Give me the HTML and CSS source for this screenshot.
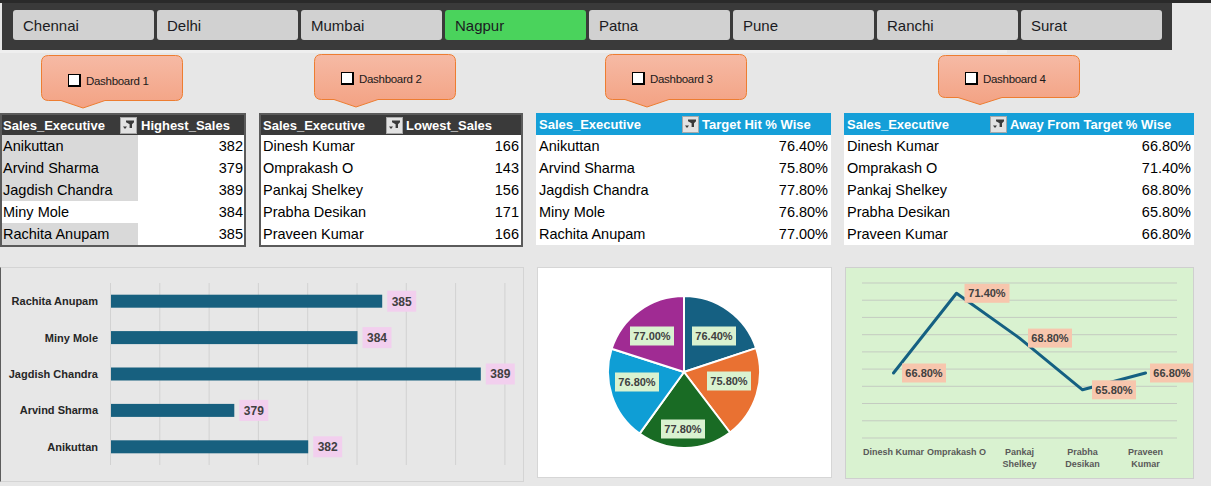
FILE: index.html
```html
<!DOCTYPE html>
<html>
<head>
<meta charset="utf-8">
<link rel="stylesheet" href="styles.css">
</head>
<body>
<div class="page">
  <div class="slicer">
    <div class="btn">Chennai</div>
    <div class="btn">Delhi</div>
    <div class="btn">Mumbai</div>
    <div class="btn on">Nagpur</div>
    <div class="btn">Patna</div>
    <div class="btn">Pune</div>
    <div class="btn">Ranchi</div>
    <div class="btn">Surat</div>
  </div>
  <div class="strip"></div>

  <div class="callouts">
    <div class="callout d1">
      <svg class="shape" width="142" height="54" viewBox="0 0 142 54"><defs><linearGradient id="g1" x1="0" y1="0" x2="0" y2="1"><stop offset="0" stop-color="#f6baa5"/><stop offset="1" stop-color="#f3a283"/></linearGradient></defs><path d="M7.5 0.5H134.5Q141.5 0.5 141.5 7.5V38.5Q141.5 45.5 134.5 45.5H64L42 53L20 45.5H7.5Q0.5 45.5 0.5 38.5V7.5Q0.5 0.5 7.5 0.5Z" fill="url(#g1)" stroke="#ed7d31"/></svg>
      <span class="chk"></span><span class="lbl">Dashboard 1</span>
    </div>
    <div class="callout d2">
      <svg class="shape" width="142" height="54" viewBox="0 0 142 54"><defs><linearGradient id="g2" x1="0" y1="0" x2="0" y2="1"><stop offset="0" stop-color="#f6baa5"/><stop offset="1" stop-color="#f3a283"/></linearGradient></defs><path d="M7.5 0.5H134.5Q141.5 0.5 141.5 7.5V38.5Q141.5 45.5 134.5 45.5H64L42 53L20 45.5H7.5Q0.5 45.5 0.5 38.5V7.5Q0.5 0.5 7.5 0.5Z" fill="url(#g2)" stroke="#ed7d31"/></svg>
      <span class="chk"></span><span class="lbl">Dashboard 2</span>
    </div>
    <div class="callout d3">
      <svg class="shape" width="142" height="54" viewBox="0 0 142 54"><defs><linearGradient id="g3" x1="0" y1="0" x2="0" y2="1"><stop offset="0" stop-color="#f6baa5"/><stop offset="1" stop-color="#f3a283"/></linearGradient></defs><path d="M7.5 0.5H134.5Q141.5 0.5 141.5 7.5V38.5Q141.5 45.5 134.5 45.5H64L42 53L20 45.5H7.5Q0.5 45.5 0.5 38.5V7.5Q0.5 0.5 7.5 0.5Z" fill="url(#g3)" stroke="#ed7d31"/></svg>
      <span class="chk"></span><span class="lbl">Dashboard 3</span>
    </div>
    <div class="callout d4">
      <svg class="shape" width="142" height="51" viewBox="0 0 142 51"><defs><linearGradient id="g4" x1="0" y1="0" x2="0" y2="1"><stop offset="0" stop-color="#f6baa5"/><stop offset="1" stop-color="#f3a283"/></linearGradient></defs><path d="M7.5 0.5H134.5Q141.5 0.5 141.5 7.5V35.5Q141.5 42.5 134.5 42.5H64L42 49.5L20 42.5H7.5Q0.5 42.5 0.5 35.5V7.5Q0.5 0.5 7.5 0.5Z" fill="url(#g4)" stroke="#ed7d31"/></svg>
      <span class="chk"></span><span class="lbl">Dashboard 4</span>
    </div>
  </div>

  <div class="tables">
    <div class="tbl t1">
      <div class="th"><span>Sales_Executive</span><svg class="flt" width="17" height="17" viewBox="0 0 17 17"><rect x="0.5" y="0.5" width="16" height="16" fill="#e2e2e2" stroke="#a8a8a8"/><path d="M6 3.5H14V5.2L12 7.3V11H9.6V7.3L6 5.2Z" fill="#3a3a3a"/><path d="M3 9.5H7L5 12Z" fill="#3a3a3a"/></svg></div>
      <div class="th h2">Highest_Sales</div>
      <div class="td n hl">Anikuttan</div><div class="td v">382</div>
      <div class="td n hl">Arvind Sharma</div><div class="td v">379</div>
      <div class="td n hl">Jagdish Chandra</div><div class="td v">389</div>
      <div class="td n">Miny Mole</div><div class="td v">384</div>
      <div class="td n hl">Rachita Anupam</div><div class="td v">385</div>
    </div>
    <div class="tbl t2">
      <div class="th"><span>Sales_Executive</span><svg class="flt" width="17" height="17" viewBox="0 0 17 17"><rect x="0.5" y="0.5" width="16" height="16" fill="#e2e2e2" stroke="#a8a8a8"/><path d="M6 3.5H14V5.2L12 7.3V11H9.6V7.3L6 5.2Z" fill="#3a3a3a"/><path d="M3 9.5H7L5 12Z" fill="#3a3a3a"/></svg></div>
      <div class="th h2">Lowest_Sales</div>
      <div class="td n">Dinesh Kumar</div><div class="td v">166</div>
      <div class="td n">Omprakash O</div><div class="td v">143</div>
      <div class="td n">Pankaj Shelkey</div><div class="td v">156</div>
      <div class="td n">Prabha Desikan</div><div class="td v">171</div>
      <div class="td n">Praveen Kumar</div><div class="td v">166</div>
    </div>
    <div class="tbl t3">
      <div class="th"><span>Sales_Executive</span><svg class="flt" width="17" height="17" viewBox="0 0 17 17"><rect x="0.5" y="0.5" width="16" height="16" fill="#e2e2e2" stroke="#a8a8a8"/><path d="M6 3.5H14V5.2L12 7.3V11H9.6V7.3L6 5.2Z" fill="#3a3a3a"/><path d="M3 9.5H7L5 12Z" fill="#3a3a3a"/></svg></div>
      <div class="th h2">Target Hit % Wise</div>
      <div class="td n">Anikuttan</div><div class="td v">76.40%</div>
      <div class="td n">Arvind Sharma</div><div class="td v">75.80%</div>
      <div class="td n">Jagdish Chandra</div><div class="td v">77.80%</div>
      <div class="td n">Miny Mole</div><div class="td v">76.80%</div>
      <div class="td n">Rachita Anupam</div><div class="td v">77.00%</div>
    </div>
    <div class="tbl t4">
      <div class="th"><span>Sales_Executive</span><svg class="flt" width="17" height="17" viewBox="0 0 17 17"><rect x="0.5" y="0.5" width="16" height="16" fill="#e2e2e2" stroke="#a8a8a8"/><path d="M6 3.5H14V5.2L12 7.3V11H9.6V7.3L6 5.2Z" fill="#3a3a3a"/><path d="M3 9.5H7L5 12Z" fill="#3a3a3a"/></svg></div>
      <div class="th h2">Away From Target % Wise</div>
      <div class="td n">Dinesh Kumar</div><div class="td v">66.80%</div>
      <div class="td n">Omprakash O</div><div class="td v">71.40%</div>
      <div class="td n">Pankaj Shelkey</div><div class="td v">68.80%</div>
      <div class="td n">Prabha Desikan</div><div class="td v">65.80%</div>
      <div class="td n">Praveen Kumar</div><div class="td v">66.80%</div>
    </div>
  </div>

  <div class="charts">
    <div class="panel p1">
      <svg class="chart" width="522" height="213" viewBox="0 0 522 213">
        <g class="grid">
          <line x1="109.5" y1="15" x2="109.5" y2="197"/>
          <line x1="158.8" y1="15" x2="158.8" y2="197"/>
          <line x1="208.1" y1="15" x2="208.1" y2="197"/>
          <line x1="257.4" y1="15" x2="257.4" y2="197"/>
          <line x1="306.7" y1="15" x2="306.7" y2="197"/>
          <line x1="356" y1="15" x2="356" y2="197"/>
          <line x1="405.3" y1="15" x2="405.3" y2="197"/>
          <line x1="454.6" y1="15" x2="454.6" y2="197"/>
          <line x1="503.9" y1="15" x2="503.9" y2="197"/>
        </g>
        <g class="bars">
          <rect x="110" y="26.7" width="271.2" height="13"/>
          <rect x="110" y="63.1" width="246.5" height="13"/>
          <rect x="110" y="99.5" width="369.8" height="13"/>
          <rect x="110" y="135.9" width="123.3" height="13"/>
          <rect x="110" y="172.3" width="197.2" height="13"/>
        </g>
        <g class="blbl">
          <rect x="386.2" y="22.7" width="29" height="21"/><text x="400.7" y="37.6">385</text>
          <rect x="361.5" y="59.1" width="29" height="21"/><text x="376" y="74">384</text>
          <rect x="484.8" y="95.5" width="29" height="21"/><text x="499.3" y="110.4">389</text>
          <rect x="238.3" y="131.9" width="29" height="21"/><text x="252.8" y="146.8">379</text>
          <rect x="312.2" y="168.3" width="29" height="21"/><text x="326.7" y="183.2">382</text>
        </g>
        <g class="cat">
          <text x="97" y="37.2">Rachita Anupam</text>
          <text x="97" y="73.6">Miny Mole</text>
          <text x="97" y="110">Jagdish Chandra</text>
          <text x="97" y="146.4">Arvind Sharma</text>
          <text x="97" y="182.8">Anikuttan</text>
        </g>
      </svg>
    </div>
    <div class="panel p2">
      <svg class="chart" width="293" height="209" viewBox="0 0 293 209">
        <g class="pie">
          <path d="M146 104L146 28A76 76 0 0 1 218.14 80.08Z" fill="#156082"/>
          <path d="M146 104L218.14 80.08A76 76 0 0 1 191.99 164.51Z" fill="#e97132"/>
          <path d="M146 104L191.99 164.51A76 76 0 0 1 101.6 165.68Z" fill="#196b24"/>
          <path d="M146 104L101.6 165.68A76 76 0 0 1 73.63 80.79Z" fill="#0f9ed5"/>
          <path d="M146 104L73.63 80.79A76 76 0 0 1 146 28Z" fill="#a02b93"/>
        </g>
        <g class="plbl">
          <rect x="154" y="58.5" width="44" height="19"/><text x="176" y="72">76.40%</text>
          <rect x="169" y="103.5" width="44" height="19"/><text x="191" y="117">75.80%</text>
          <rect x="123" y="151.5" width="44" height="19"/><text x="145" y="165">77.80%</text>
          <rect x="77" y="104.5" width="44" height="19"/><text x="99" y="118">76.80%</text>
          <rect x="92" y="58.5" width="44" height="19"/><text x="114" y="72">77.00%</text>
        </g>
      </svg>
    </div>
    <div class="panel p3">
      <svg class="chart" width="347" height="210" viewBox="0 0 347 210">
        <g class="hgrid">
          <line x1="16" y1="15" x2="331" y2="15"/>
          <line x1="16" y1="32.2" x2="331" y2="32.2"/>
          <line x1="16" y1="49.4" x2="331" y2="49.4"/>
          <line x1="16" y1="66.7" x2="331" y2="66.7"/>
          <line x1="16" y1="83.9" x2="331" y2="83.9"/>
          <line x1="16" y1="101.1" x2="331" y2="101.1"/>
          <line x1="16" y1="118.3" x2="331" y2="118.3"/>
          <line x1="16" y1="135.5" x2="331" y2="135.5"/>
          <line x1="16" y1="152.8" x2="331" y2="152.8"/>
          <line x1="16" y1="170" x2="331" y2="170"/>
        </g>
        <polyline class="ln" points="47.5,105 110.5,25.3 173.5,70.1 236.5,121.8 299.5,105"/>
        <g class="llbl">
          <rect x="56" y="95.5" width="44" height="19"/><text x="78" y="109">66.80%</text>
          <rect x="118.5" y="15.8" width="45" height="19"/><text x="141" y="29.3">71.40%</text>
          <rect x="182" y="60.6" width="44" height="19"/><text x="204" y="74.1">68.80%</text>
          <rect x="246" y="112.3" width="44" height="19"/><text x="268" y="125.8">65.80%</text>
          <rect x="304" y="95.5" width="44" height="19"/><text x="326" y="109">66.80%</text>
        </g>
        <g class="lcat">
          <text x="47.5" y="187">Dinesh Kumar</text>
          <text x="110.5" y="187">Omprakash O</text>
          <text x="173.5" y="187">Pankaj</text>
          <text x="173.5" y="198.5">Shelkey</text>
          <text x="236.5" y="187">Prabha</text>
          <text x="236.5" y="198.5">Desikan</text>
          <text x="299.5" y="187">Praveen</text>
          <text x="299.5" y="198.5">Kumar</text>
        </g>
      </svg>
    </div>
  </div>
</div>
</body>
</html>
```

FILE: styles.css
```css
body {
  margin: 0;
  background: #e7e7e7;
  font-family: "Liberation Sans", Arial, sans-serif;
}

.page {
  width: 1211px;
  border-top: 3px solid #2a2a2a;
}

/* slicer bar */
.slicer {
  margin-left: 2px;
  width: 1170px;
  height: 47px;
  background: #3a3a3a;
  display: flex;
  gap: 3px;
  padding: 7px 0 0 11px;
  box-sizing: border-box;
}

.btn {
  width: 141px;
  height: 30px;
  background: #d1d1d1;
  border-radius: 3px;
  font-size: 15px;
  color: #1b1b22;
  padding-left: 10px;
  box-sizing: border-box;
  display: flex;
  align-items: center;
}

.btn.on {
  background: #4ad35c;
}

.strip {
  width: 1007px;
  height: 3px;
  background: #efefef;
}

/* callouts */
.callouts {
  height: 60px;
  display: flex;
  align-items: flex-start;
  padding-top: 1px;
  box-sizing: border-box;
}

.callout {
  position: relative;
  width: 142px;
  height: 54px;
  display: flex;
  align-items: flex-start;
  padding: 19px 0 0 27px;
  box-sizing: border-box;
  font-size: 11.5px;
  letter-spacing: -0.3px;
  color: #1a1a1a;
}

.callout .shape {
  position: absolute;
  left: 0;
  top: 0;
}

.callout .chk,
.callout .lbl {
  position: relative;
}

.callout .chk {
  display: block;
  flex: none;
  width: 13px;
  height: 13px;
  background: #fff;
  border: 1px solid #000;
  border-right-width: 2px;
  border-bottom-width: 2px;
  box-sizing: border-box;
  margin-right: 5px;
}

.callout .lbl {
  display: block;
  line-height: 14px;
}

.d1 { margin-left: 41px; margin-top: 1px; }
.d2 { margin-left: 131px; padding-top: 18px; }
.d3 { margin-left: 149px; padding-top: 18px; }
.d4 { margin-left: 191px; margin-top: 1px; height: 51px; padding-top: 17px; }

/* tables */
.tables {
  display: flex;
  gap: 13px;
  align-items: flex-start;
}

.tbl {
  display: grid;
  grid-auto-rows: 22px;
  grid-template-rows: 22px;
  background: #fff;
  box-sizing: border-box;
}

.t1 {
  width: 246px;
  grid-template-columns: 136px 1fr;
  grid-template-rows: 20px;
  border: 2px solid #5b5b5b;
}

.t2 {
  width: 264px;
  grid-template-columns: 143px 1fr;
  grid-template-rows: 20px;
  border: 2px solid #5b5b5b;
}

.t3 {
  width: 295px;
  grid-template-columns: 164px 1fr;
}

.t4 {
  width: 350px;
  grid-template-columns: 164px 1fr;
}

.th {
  background: #3a3a3a;
  color: #fff;
  font-weight: bold;
  font-size: 13px;
  display: flex;
  align-items: center;
  justify-content: space-between;
  padding-left: 1px;
  white-space: nowrap;
}

.t3 .th,
.t4 .th {
  background: #159fd8;
  padding-left: 3px;
}

.t2 .th { padding-left: 2px; }

.th.h2 {
  justify-content: flex-start;
  padding-left: 3px;
}

.t2 .th.h2,
.t3 .th.h2,
.t4 .th.h2 {
  padding-left: 2px;
}

.flt {
  display: block;
  flex: none;
  margin-right: 1px;
}

.td {
  font-size: 14.5px;
  color: #000;
  display: flex;
  align-items: center;
  white-space: nowrap;
}

.td.n { padding-left: 1px; }
.t2 .td.n { padding-left: 2px; }
.t3 .td.n,
.t4 .td.n { padding-left: 3px; }

.td.hl { background: #d9d9d9; }

.td.v {
  justify-content: flex-end;
  padding-right: 1px;
}

.t2 .td.v { padding-right: 2px; }
.t3 .td.v,
.t4 .td.v { padding-right: 3px; }

/* charts */
.charts {
  display: flex;
  gap: 13px;
  margin-top: 20px;
  align-items: flex-start;
}

.panel {
  box-sizing: border-box;
}

.chart {
  display: block;
}

.p1 {
  width: 524px;
  height: 215px;
  border: 1px solid #d4d4d4;
  border-left-color: #5c5c5c;
}

.p2 {
  width: 295px;
  height: 211px;
  background: #fff;
  border: 1px solid #d6d6d6;
}

.p3 {
  width: 349px;
  height: 212px;
  background: #d9f2d0;
  border: 1px solid #cfcfcf;
}

.grid line {
  stroke: #d2d2d2;
  stroke-width: 1;
}

.bars rect {
  fill: #17607f;
}

.blbl rect {
  fill: #f2cfee;
}

.blbl text {
  font-family: "Liberation Sans", Arial, sans-serif;
  font-weight: bold;
  font-size: 12px;
  fill: #404040;
  text-anchor: middle;
}

.cat text {
  font-family: "Liberation Sans", Arial, sans-serif;
  font-weight: bold;
  font-size: 11px;
  fill: #262626;
  text-anchor: end;
}

.pie path {
  stroke: #fff;
  stroke-width: 2;
  stroke-linejoin: round;
}

.plbl rect {
  fill: #d9f2d0;
}

.plbl text,
.llbl text {
  font-family: "Liberation Sans", Arial, sans-serif;
  font-weight: bold;
  font-size: 11px;
  fill: #404040;
  text-anchor: middle;
}

.hgrid line {
  stroke: #c4cbc1;
  stroke-width: 1;
}

.ln {
  fill: none;
  stroke: #156082;
  stroke-width: 3;
  stroke-linejoin: round;
  stroke-linecap: round;
}

.llbl rect {
  fill: #f7c6ad;
}

.lcat text {
  font-family: "Liberation Sans", Arial, sans-serif;
  font-weight: bold;
  font-size: 9px;
  fill: #595959;
  text-anchor: middle;
}
```
